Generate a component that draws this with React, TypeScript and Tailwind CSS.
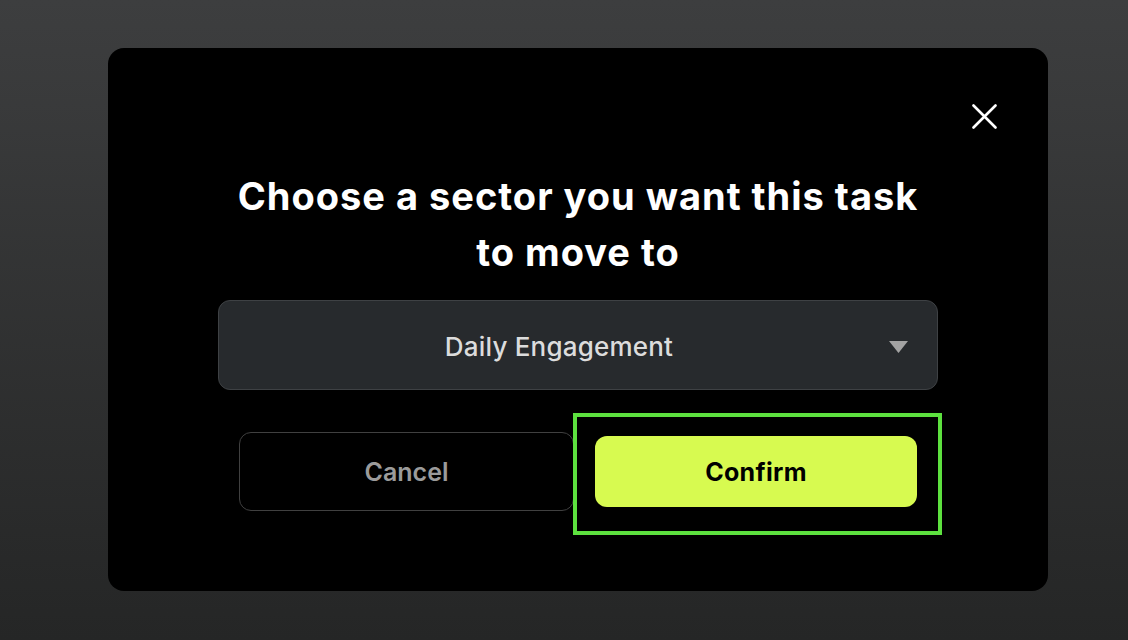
export default function App() {
    return (
        <div className="w-[1128px] h-[640px] bg-gradient-to-b from-[#3d3e3f] to-[#252626] pt-[48px] pl-[108px]" style={{ fontFamily: 'Inter, "Noto Sans", sans-serif' }}>
            <div className="w-[940px] h-[543px] bg-black rounded-[16px] flex flex-col">
                <div className="flex justify-end pt-[56px] pr-[51px] h-[80px]">
                    <svg width="25" height="25" viewBox="0 0 25 25">
                        <path d="M1.5 1.5 L23.5 23.5 M23.5 1.5 L1.5 23.5" stroke="white" strokeWidth="2.6" strokeLinecap="round" />
                    </svg>
                </div>

                <h1 className="mt-[40px] text-white text-[38px] leading-[56px] font-bold text-center px-[120px] tracking-[1px]">
                    Choose a sector you want this task to move to
                </h1>

                <div className="mt-[20px] mx-[110px] h-[90px] bg-[#272a2d] border border-[#3e4144] rounded-[12px] flex items-center relative">
                    <span className="flex-1 text-center pr-[38px] pt-[3px] text-[26px] text-[#dcdcdc] font-medium tracking-[0.2px]">Daily Engagement</span>
                    <svg className="absolute right-[29px] top-[40px]" width="19" height="12" viewBox="0 0 19 12">
                        <path d="M0 0 H19 L9.5 12 Z" fill="#a3a3a3" />
                    </svg>
                </div>

                <div className="mt-[23px] flex items-start pl-[131px]">
                    <button className="mt-[19px] w-[335px] h-[79px] border-[1.5px] border-[#404040] rounded-[12px] text-[25px] font-semibold text-[#9b9b9b] pt-[2px]">
                        Cancel
                    </button>
                    <div className="-ml-px border-[4px] border-[#5de13f] pl-[18px] pr-[21px] pt-[19px] pb-[24px]">
                        <button className="w-[322px] h-[71px] bg-[#d7fa50] rounded-[12px] text-[25px] font-bold text-black tracking-[0.3px] pt-[2px]">
                            Confirm
                        </button>
                    </div>
                </div>
            </div>
        </div>
    );
}
